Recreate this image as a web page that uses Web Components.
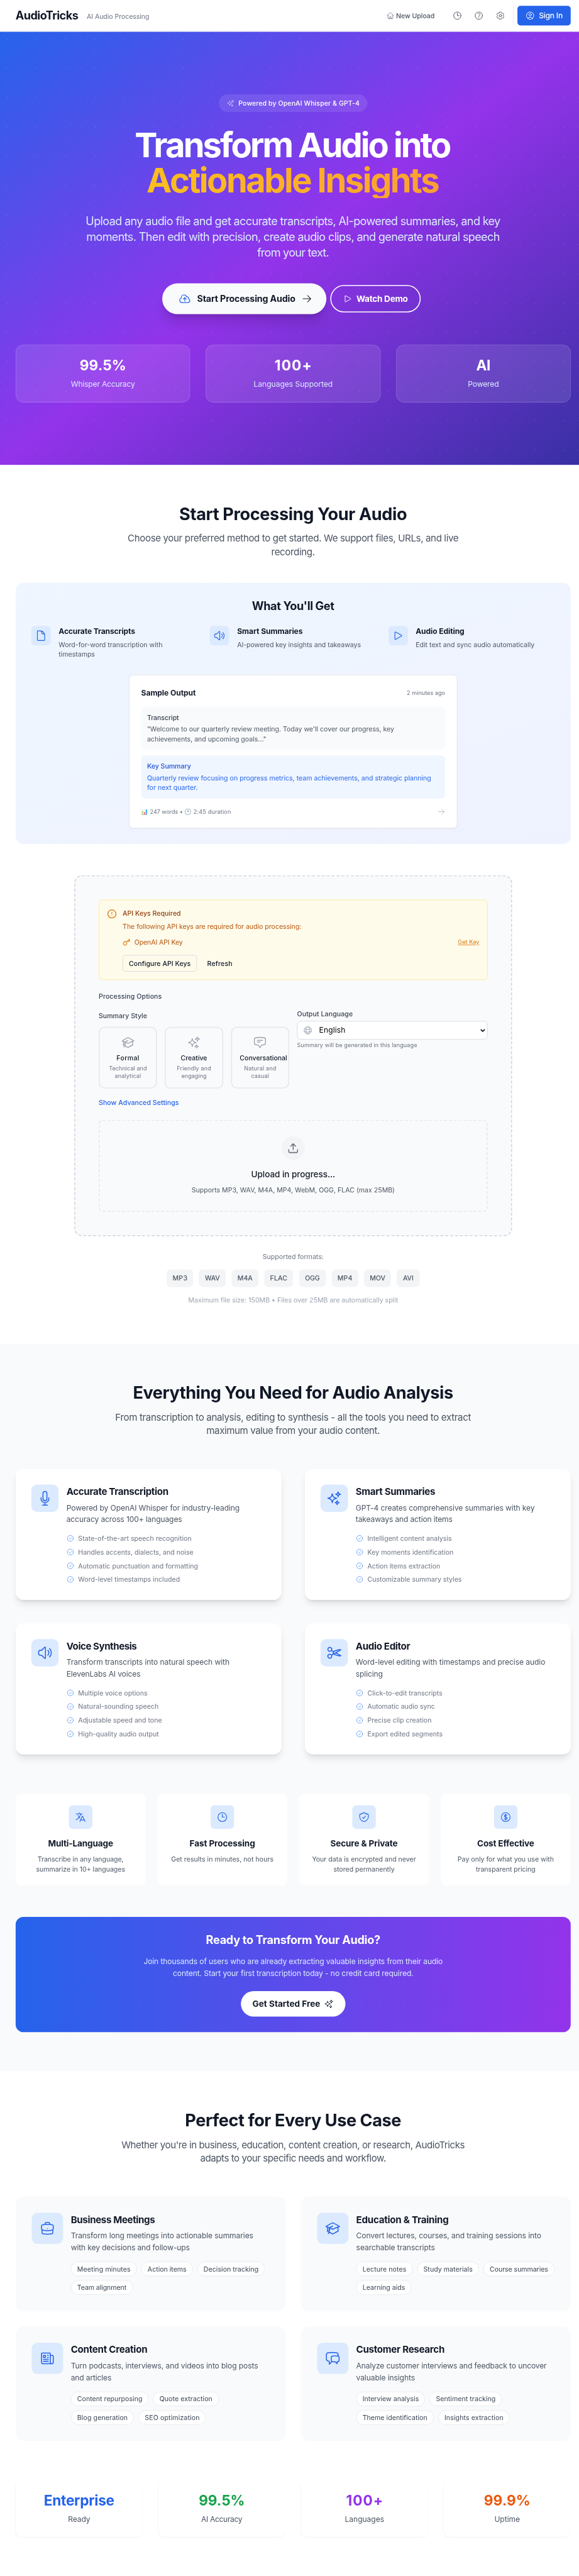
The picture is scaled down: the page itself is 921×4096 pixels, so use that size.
<!DOCTYPE html>
<html lang="en">
<head>
<meta charset="utf-8">
<title>AudioTricks</title>
<style>
html, body { margin: 0; height: 100%; overflow: hidden; background: #fff; }
body { font-family: Inter, "Liberation Sans", sans-serif; font-weight: 440; color: #111827; }
</style>
</head>
<body>
<audio-tricks-app></audio-tricks-app>
<script>
const ICONS = {
  home: 'm2.25 12 8.954-8.955c.44-.439 1.152-.439 1.591 0L21.75 12M4.5 9.75v10.125c0 .621.504 1.125 1.125 1.125H9.75v-4.875c0-.621.504-1.125 1.125-1.125h2.25c.621 0 1.125.504 1.125 1.125V21h4.125c.621 0 1.125-.504 1.125-1.125V9.75M8.25 21h8.25',
  clock: 'M12 6v6h4.5m4.5 0a9 9 0 1 1-18 0 9 9 0 0 1 18 0Z',
  question: 'M9.879 7.519c1.171-1.025 3.071-1.025 4.242 0 1.172 1.025 1.172 2.687 0 3.712-.203.179-.43.326-.67.442-.745.361-1.45.999-1.45 1.827v.75M21 12a9 9 0 1 1-18 0 9 9 0 0 1 18 0Zm-9 5.25h.008v.008H12v-.008Z',
  cog: 'M9.594 3.94c.09-.542.56-.94 1.11-.94h2.593c.55 0 1.02.398 1.11.94l.213 1.281c.063.374.313.686.645.87.074.04.147.083.22.127.325.196.72.257 1.075.124l1.217-.456a1.125 1.125 0 0 1 1.37.49l1.296 2.247a1.125 1.125 0 0 1-.26 1.431l-1.003.827c-.293.241-.438.613-.43.992a7.723 7.723 0 0 1 0 .255c-.008.378.137.75.43.991l1.004.827c.424.35.534.955.26 1.43l-1.298 2.247a1.125 1.125 0 0 1-1.369.491l-1.217-.456c-.355-.133-.75-.072-1.076.124a6.47 6.47 0 0 1-.22.128c-.331.183-.581.495-.644.869l-.213 1.281c-.09.543-.56.94-1.11.94h-2.594c-.55 0-1.019-.398-1.11-.94l-.213-1.281c-.062-.374-.312-.686-.644-.87a6.52 6.52 0 0 1-.22-.127c-.325-.196-.72-.257-1.076-.124l-1.217.456a1.125 1.125 0 0 1-1.369-.49l-1.297-2.247a1.125 1.125 0 0 1 .26-1.431l1.004-.827c.292-.24.437-.613.43-.991a6.932 6.932 0 0 1 0-.255c.007-.38-.138-.751-.43-.992l-1.004-.827a1.125 1.125 0 0 1-.26-1.43l1.297-2.247a1.125 1.125 0 0 1 1.37-.491l1.216.456c.356.133.751.072 1.076-.124.072-.044.146-.086.22-.128.332-.183.582-.495.644-.869l.214-1.28ZM15 12a3 3 0 1 1-6 0 3 3 0 0 1 6 0Z',
  user: 'M17.982 18.725A7.488 7.488 0 0 0 12 15.75a7.488 7.488 0 0 0-5.982 2.975m11.963 0a9 9 0 1 0-11.963 0m11.963 0A8.966 8.966 0 0 1 12 21a8.966 8.966 0 0 1-5.982-2.275M15 9.75a3 3 0 1 1-6 0 3 3 0 0 1 6 0Z',
  sparkles: 'M9.813 15.904 9 18.75l-.813-2.846a4.5 4.5 0 0 0-3.09-3.09L2.25 12l2.846-.813a4.5 4.5 0 0 0 3.09-3.09L9 5.25l.813 2.846a4.5 4.5 0 0 0 3.09 3.09L15.75 12l-2.846.813a4.5 4.5 0 0 0-3.09 3.09ZM18.259 8.715 18 9.75l-.259-1.035a3.375 3.375 0 0 0-2.455-2.456L14.25 6l1.036-.259a3.375 3.375 0 0 0 2.455-2.456L18 2.25l.259 1.035a3.375 3.375 0 0 0 2.456 2.456L21.75 6l-1.035.259a3.375 3.375 0 0 0-2.456 2.456ZM16.894 20.567 16.5 21.75l-.394-1.183a2.25 2.25 0 0 0-1.423-1.423L13.5 18.75l1.183-.394a2.25 2.25 0 0 0 1.423-1.423l.394-1.183.394 1.183a2.25 2.25 0 0 0 1.423 1.423l1.183.394-1.183.394a2.25 2.25 0 0 0-1.423 1.423Z',
  cloud: 'M12 16.5V9.75m0 0 3 3m-3-3-3 3M6.75 19.5a4.5 4.5 0 0 1-1.41-8.775 5.25 5.25 0 0 1 10.233-2.33 3 3 0 0 1 3.758 3.848A3.752 3.752 0 0 1 18 19.5H6.75Z',
  arrow: 'M13.5 4.5 21 12m0 0-7.5 7.5M21 12H3',
  play: 'M5.25 5.653c0-.856.917-1.398 1.667-.986l11.54 6.347a1.125 1.125 0 0 1 0 1.972l-11.54 6.347a1.125 1.125 0 0 1-1.667-.986V5.653Z',
  document: 'M19.5 14.25v-2.625a3.375 3.375 0 0 0-3.375-3.375h-1.5A1.125 1.125 0 0 1 13.5 7.125v-1.5a3.375 3.375 0 0 0-3.375-3.375H8.25m2.25 0H5.625c-.621 0-1.125.504-1.125 1.125v17.25c0 .621.504 1.125 1.125 1.125h12.75c.621 0 1.125-.504 1.125-1.125V11.25a9 9 0 0 0-9-9Z',
  speaker: 'M19.114 5.636a9 9 0 0 1 0 12.728M16.463 8.288a5.25 5.25 0 0 1 0 7.424M6.75 8.25l4.72-4.72a.75.75 0 0 1 1.28.53v15.88a.75.75 0 0 1-1.28.53l-4.72-4.72H4.51c-.88 0-1.704-.507-1.938-1.354A9.009 9.009 0 0 1 2.25 12c0-.83.112-1.633.322-2.396C2.806 8.756 3.63 8.25 4.51 8.25H6.75Z',
  alert: 'M22 12a10 10 0 1 1-20 0 10 10 0 0 1 20 0ZM12 8v4M12 16h.01',
  key: 'm21 2-2 2m-7.61 7.61a5.5 5.5 0 1 1-7.778 7.778 5.5 5.5 0 0 1 7.777-7.777zm0 0L15.5 7.5m0 0 3 3L22 7l-3-3m-3.5 3.5L19 4',
  upload: 'M21 15v4a2 2 0 0 1-2 2H5a2 2 0 0 1-2-2v-4M17 8l-5-5-5 5M12 3v12',
  academic: 'M4.26 10.147a60.438 60.438 0 0 0-.491 6.347A48.62 48.62 0 0 1 12 20.904a48.62 48.62 0 0 1 8.232-4.41 60.46 60.46 0 0 0-.491-6.347m-15.482 0a50.636 50.636 0 0 0-2.658-.813A59.906 59.906 0 0 1 12 3.493a59.903 59.903 0 0 1 10.399 5.84c-.896.248-1.783.52-2.658.814m-15.482 0A50.717 50.717 0 0 1 12 13.489a50.702 50.702 0 0 1 7.74-3.342M6.75 15a.75.75 0 1 0 0-1.5.75.75 0 0 0 0 1.5Zm0 0v-3.675A55.378 55.378 0 0 1 12 8.443m-7.007 11.55A5.981 5.981 0 0 0 6.75 15.75v-1.5',
  bubble: 'M7.5 8.25h9m-9 3H12m-9.75 1.51c0 1.6 1.123 2.994 2.707 3.227 1.129.166 2.27.293 3.423.379.35.026.67.21.865.501L12 21l2.755-4.133a1.14 1.14 0 0 1 .865-.501 48.172 48.172 0 0 0 3.423-.379c1.584-.233 2.707-1.626 2.707-3.228V6.741c0-1.602-1.123-2.995-2.707-3.228A48.394 48.394 0 0 0 12 3c-2.392 0-4.744.175-7.043.513C3.373 3.746 2.25 5.14 2.25 6.741v6.018Z',
  globe: 'M12 21a9.004 9.004 0 0 0 8.716-6.747M12 21a9.004 9.004 0 0 1-8.716-6.747M12 21c2.485 0 4.5-4.03 4.5-9S14.485 3 12 3m0 18c-2.485 0-4.5-4.03-4.5-9S9.515 3 12 3m0 0a8.997 8.997 0 0 1 7.843 4.582M12 3a8.997 8.997 0 0 0-7.843 4.582m15.686 0A11.953 11.953 0 0 1 12 10.5c-2.998 0-5.74-1.1-7.843-2.918m15.686 0A8.959 8.959 0 0 1 21 12c0 .778-.099 1.533-.284 2.253m0 0A17.919 17.919 0 0 1 12 16.5c-3.162 0-6.133-.815-8.716-2.247m0 0A9.015 9.015 0 0 1 3 12c0-1.605.42-3.113 1.157-4.418',
  mic: 'M12 18.75a6 6 0 0 0 6-6v-1.5m-6 7.5a6 6 0 0 1-6-6v-1.5m6 7.5v3.75m-3.75 0h7.5M12 15.75a3 3 0 0 1-3-3V4.5a3 3 0 1 1 6 0v8.25a3 3 0 0 1-3 3Z',
  scissors: 'm7.848 8.25 1.536.887M7.848 8.25a3 3 0 1 1-5.196-3 3 3 0 0 1 5.196 3Zm1.536.887a2.165 2.165 0 0 1 1.083 1.839c.005.351.054.695.14 1.024M9.384 9.137l2.077 1.199M7.848 15.75l1.536-.887m-1.536.887a3 3 0 1 1-5.196 3 3 3 0 0 1 5.196-3Zm1.536-.887a2.165 2.165 0 0 0 1.083-1.838c.005-.352.054-.695.14-1.025m-1.223 2.863 2.077-1.199m0-3.328a4.323 4.323 0 0 1 2.068-1.379l5.325-1.628a4.5 4.5 0 0 1 2.48-.044l.803.215-7.794 4.5m-2.882-1.664A4.33 4.33 0 0 0 10.607 12m3.736 0 7.794 4.5-.802.215a4.5 4.5 0 0 1-2.48-.043l-5.326-1.629a4.324 4.324 0 0 1-2.068-1.379M14.343 12l-2.882 1.664',
  check: 'M9 12.75 11.25 15 15 9.75M21 12a9 9 0 1 1-18 0 9 9 0 0 1 18 0Z',
  language: 'm10.5 21 5.25-11.25L21 21m-9-3h7.5M3 5.621a48.474 48.474 0 0 1 6-.371m0 0c1.12 0 2.233.038 3.334.114M9 5.25V3m3.334 2.364C11.176 10.658 7.69 15.08 3 17.502m9.334-12.138c.896.061 1.785.147 2.666.257m-4.589 8.495a18.023 18.023 0 0 1-3.827-5.802',
  shield: 'M9 12.75 11.25 15 15 9.75m-3-7.036A11.959 11.959 0 0 1 3.598 6 11.99 11.99 0 0 0 3 9.749c0 5.592 3.824 10.29 9 11.623 5.176-1.332 9-6.03 9-11.622 0-1.31-.21-2.571-.598-3.751h-.152c-3.196 0-6.1-1.248-8.25-3.285Z',
  dollar: 'M12 6v12m-3-2.818.879.659c1.171.879 3.07.879 4.242 0 1.172-.879 1.172-2.303 0-3.182C13.536 12.219 12.768 12 12 12c-.725 0-1.45-.22-2.003-.659-1.106-.879-1.106-2.303 0-3.182s2.9-.879 4.006 0l.415.33M21 12a9 9 0 1 1-18 0 9 9 0 0 1 18 0Z',
  briefcase: 'M20.25 14.15v4.25c0 1.094-.787 2.036-1.872 2.18-2.087.277-4.216.42-6.378.42s-4.291-.143-6.378-.42c-1.085-.144-1.872-1.086-1.872-2.18v-4.25m16.5 0a2.18 2.18 0 0 0 .75-1.661V8.706c0-1.081-.768-2.015-1.837-2.175a48.114 48.114 0 0 0-3.413-.387m4.5 8.006c-.194.165-.42.295-.673.38A23.978 23.978 0 0 1 12 15.75c-2.648 0-5.195-.429-7.577-1.22a2.016 2.016 0 0 1-.673-.38m0 0A2.18 2.18 0 0 1 3 12.489V8.706c0-1.081.768-2.015 1.837-2.175a48.111 48.111 0 0 1 3.413-.387m7.5 0V5.25A2.25 2.25 0 0 0 13.5 3h-3a2.25 2.25 0 0 0-2.25 2.25v.894m7.5 0a48.667 48.667 0 0 0-7.5 0M12 12.75h.008v.008H12v-.008Z',
  newspaper: 'M12 7.5h1.5m-1.5 3h1.5m-7.5 3h7.5m-7.5 3h7.5m3-9h3.375c.621 0 1.125.504 1.125 1.125V18a2.25 2.25 0 0 1-2.25 2.25M16.5 7.5V18a2.25 2.25 0 0 0 2.25 2.25M16.5 7.5V4.875c0-.621-.504-1.125-1.125-1.125H4.125C3.504 3.75 3 4.254 3 4.875V18a2.25 2.25 0 0 0 2.25 2.25h13.5M6 7.5h3v3H6v-3Z',
  chats: 'M20.25 8.511c.884.284 1.5 1.128 1.5 2.097v4.286c0 1.136-.847 2.1-1.98 2.193-.34.027-.68.052-1.02.072v3.091l-3-3c-1.354 0-2.694-.055-4.02-.163a2.115 2.115 0 0 1-.825-.242m9.345-8.334a2.126 2.126 0 0 0-.476-.095 48.64 48.64 0 0 0-8.048 0c-1.131.094-1.976 1.057-1.976 2.192v4.286c0 .837.46 1.58 1.155 1.951m9.345-8.334V6.637c0-1.621-1.152-3.026-2.76-3.235A48.455 48.455 0 0 0 11.25 3c-2.115 0-4.198.137-6.24.402-1.608.209-2.76 1.614-2.76 3.235v6.226c0 1.621 1.152 3.026 2.76 3.235.577.075 1.157.14 1.74.194V21l4.155-4.155'
};

/* Shared type scale and text alignment helpers, included in every shadow root. */
const BASE = `
*, *::before, *::after { box-sizing: border-box; }
:host { display: block; box-sizing: border-box; }
h1, h2, h3, h4, h5, p { margin: 0; padding: 0; }
.t12 { font-size: 11.64px; line-height: 16px; }
.t14 { font-size: 13.58px; line-height: 20px; }
.t16 { font-size: 15.52px; line-height: 24px; }
.t18 { font-size: 17.46px; line-height: 28px; }
.t20 { font-size: 19.4px; line-height: 28px; }
.t24 { font-size: 23.28px; line-height: 32px; }
.t30 { font-size: 29.1px; line-height: 36px; }
.t36 { font-size: 34.92px; line-height: 40px; }
.m { font-weight: 540; } .s { font-weight: 650; } .b { font-weight: 735; }
.lines { display: flex; flex-direction: column; align-items: flex-start; }
.mid { align-items: center; text-align: center; }
.row { display: flex; align-items: center; }
.c5 { color: #6b7280; } .c6 { color: #4b5563; } .c7 { color: #374151; } .c9 { color: #111827; }
`;
const esc = s => s.replace(/&/g, '&amp;');
const T = (text, w) => `<fit-text w="${w}">${esc(text)}</fit-text>`;
const L = (...pairs) => pairs.map(([t, w]) => T(t, w)).join('');
const define = (tag, css, html) => customElements.define(tag, class extends HTMLElement {
  connectedCallback() {
    if (this.shadowRoot) return;
    const root = this.attachShadow({ mode: 'open' });
    root.innerHTML = `<style>${BASE}${css}</style>${typeof html === 'function' ? html(this) : html}`;
  }
});

/* One line of text tracked to a target optical width. */
const ruler = document.createElement('canvas').getContext('2d');
customElements.define('fit-text', class extends HTMLElement {
  connectedCallback() {
    if (this.shadowRoot) return;
    this.attachShadow({ mode: 'open' }).innerHTML = '<style>:host{display:inline-block;white-space:nowrap}</style><slot></slot>';
    const text = this.textContent, w = parseFloat(this.getAttribute('w')), cs = getComputedStyle(this);
    if (!w || text.length < 2) return;
    ruler.font = `${cs.fontWeight} ${cs.fontSize} Inter`;
    const m = ruler.measureText(text);
    const gap = (w - (m.actualBoundingBoxLeft + m.actualBoundingBoxRight)) / (text.length - 1);
    this.style.letterSpacing = gap.toFixed(4) + 'px';
    this.style.marginRight = (-gap).toFixed(4) + 'px';
  }
});

customElements.define('ui-icon', class extends HTMLElement {
  connectedCallback() {
    if (this.shadowRoot) return;
    const s = this.getAttribute('size') || 24;
    this.attachShadow({ mode: 'open' }).innerHTML = `<style>:host{display:block;flex:none;width:${s}px;height:${s}px}svg{display:block}</style>
    <svg width="${s}" height="${s}" viewBox="0 0 24 24" fill="none" stroke="currentColor" stroke-width="${this.getAttribute('stroke') || 1.5}" stroke-linecap="round" stroke-linejoin="round"><path d="${ICONS[this.getAttribute('name')]}"/></svg>`;
  }
});

define('icon-tile', `
:host { display: flex; flex: none; align-items: center; justify-content: center; background: #dbeafe; color: #2563eb; width: var(--tile); height: var(--tile); border-radius: var(--r, 8px); }
`, el => `<ui-icon name="${el.getAttribute('name')}" size="${el.getAttribute('size')}"></ui-icon>`);

define('top-nav', `
:host { display: flex; align-items: center; height: 65px; padding: 0 32px; background: #fff; border-bottom: 1px solid #e5e7eb; }
.tag { margin-left: 17px; margin-top: 1px; }
.right { margin-left: auto; display: flex; align-items: center; color: #4b5563; }
.up { gap: 4px; margin-right: 28.5px; }
.up ui-icon { opacity: .85; }
.btn { width: 36px; height: 36px; margin-right: 8px; display: flex; align-items: center; justify-content: center; }
.rule { width: 1px; height: 40px; background: #e5e7eb; margin-right: 8px; }
.sign { gap: 8px; width: 109px; height: 40px; padding: 0 16px; border-radius: 6px; background: #2563eb; color: #fff; }
`, `
<h1 class="t24 b">${T('AudioTricks', 128.5)}</h1>
<span class="tag t14 c5">${T('AI Audio Processing', 127.7)}</span>
<div class="right">
  <div class="up row t14 m"><ui-icon name="home" size="16"></ui-icon>${T('New Upload', 77.5)}</div>
  <div class="btn"><ui-icon name="clock" size="20"></ui-icon></div>
  <div class="btn"><ui-icon name="question" size="20"></ui-icon></div>
  <div class="btn"><ui-icon name="cog" size="20"></ui-icon></div>
  <div class="rule"></div>
  <div class="sign row t16 m"><ui-icon name="user" size="20"></ui-icon>${T('Sign In', 48.4)}</div>
</div>`);

define('glass-stat', `
:host { display: flex; flex-direction: column; align-items: center; gap: 8px; padding: 24px; border: 1px solid rgba(255,255,255,.2); border-radius: 16px; background: rgba(255,255,255,.1); color: #fff; }
.l { color: #dbeafe; }
`, el => `<div class="t30 b">${T(el.getAttribute('value'), el.getAttribute('vw'))}</div><div class="t16 l">${T(el.getAttribute('label'), el.getAttribute('lw'))}</div>`);

define('hero-banner', `
:host { height: 886px; padding: 128px 32px 0; color: #fff; display: flex; flex-direction: column; align-items: center;
  background:
    radial-gradient(circle at 15px 15px, rgba(255,255,255,.09) 1px, transparent 1.6px) 0 0/60px 60px,
    radial-gradient(circle at 45px 15px, rgba(255,255,255,.06) 1px, transparent 1.6px) 0 0/60px 60px,
    radial-gradient(circle at 15px 45px, rgba(255,255,255,.06) 1px, transparent 1.6px) 0 0/60px 60px,
    linear-gradient(to bottom right, #2563eb, #9333ea, #3730a3); }
.badge { height: 36px; padding: 0 16px; gap: 8px; border-radius: 18px; background: rgba(255,255,255,.1); }
.badge ui-icon { color: rgba(255,255,255,.65); }
h1 { font-size: 69.84px; line-height: 72px; font-weight: 720; margin-top: 32px; align-self: stretch; text-align: center; }
h1 span { display: block; height: 72px; }
.gold { color: transparent; background: linear-gradient(to right, #facc15, #fb923c); -webkit-background-clip: text; background-clip: text; }
.lead { margin-top: 32px; color: #dbeafe; font-size: 23.28px; line-height: 32px; }
.actions { margin-top: 48px; gap: 16px; height: 60px; }
.primary { width: 320px; height: 60px; padding: 0 28px 0 32px; gap: 12px; border-radius: 30px; background: #f9fafb; color: #111827; transform: scale(1.05); box-shadow: 0 20px 25px -5px rgba(0,0,0,.14), 0 8px 10px -6px rgba(0,0,0,.14); }
.primary ui-icon:first-child { color: #2563eb; }
.primary ui-icon:last-child { margin-left: auto; }
.demo { width: 185px; height: 56px; padding: 0 24px; gap: 8px; border-radius: 28px; border: 2px solid #fff; }
.stats { align-self: stretch; margin-top: 64px; display: grid; grid-template-columns: repeat(3, 1fr); gap: 32px; }
`, `
<div class="badge row t14 m"><ui-icon name="sparkles" size="16"></ui-icon>${T('Powered by OpenAI Whisper & GPT-4', 247)}</div>
<h1><span>${T('Transform Audio into', 644.6)}</span><span class="gold">${T('Actionable Insights', 597)}</span></h1>
<p class="lead lines mid">${L(['Upload any audio file and get accurate transcripts, AI-powered summaries, and key', 847], ['moments. Then edit with precision, create audio clips, and generate natural speech', 844], ['from your text.', 146])}</p>
<div class="actions row">
  <div class="primary row t18 s"><ui-icon name="cloud" size="24"></ui-icon>${T('Start Processing Audio', 191)}<ui-icon name="arrow" size="20"></ui-icon></div>
  <div class="demo row t18 s"><ui-icon name="play" size="20"></ui-icon>${T('Watch Demo', 104.7)}</div>
</div>
<div class="stats">
  <glass-stat value="99.5%" vw="91.4" label="Whisper Accuracy" lw="131.5"></glass-stat>
  <glass-stat value="100+" vw="73.3" label="Languages Supported" lw="160"></glass-stat>
  <glass-stat value="AI" vw="28" label="Powered" lw="62"></glass-stat>
</div>`);

define('section-head', `
:host { display: flex; flex-direction: column; align-items: center; gap: 16px; }
`, `<h2 class="t36 b c9"><slot name="title"></slot></h2><p class="t20 c6 lines mid"><slot></slot></p>`);

define('gain-item', `
:host { display: flex; gap: 16px; }
p { margin-top: 4px; }
`, el => `<icon-tile name="${el.getAttribute('icon')}" size="24" style="--tile:40px"></icon-tile><div><h4 class="t16 s c9"><slot name="title"></slot></h4><p class="t14 c6 lines"><slot></slot></p></div>`);

define('sample-output', `
:host { width: 672px; height: 314px; padding: 24px; border: 1px solid #e5e7eb; border-radius: 8px; background: #fff; box-shadow: 0 1px 2px rgba(0,0,0,.05); }
.head, .foot { display: flex; justify-content: space-between; align-items: center; }
.head { height: 24px; margin-bottom: 16px; }
.box { height: 88px; padding: 12px; border-radius: 8px; background: #f9fafb; margin-bottom: 12px; }
.box p { margin-top: 4px; }
.blue { background: #eff6ff; color: #2563eb; margin-bottom: 16px; }
.blue h5 { color: #1d4ed8; }
.foot { height: 20px; padding-top: 2px; }
.meta { gap: 4px; }
.e { width: 14px; font-size: 12px; font-family: "Noto Color Emoji", sans-serif; white-space: nowrap; }
.foot > ui-icon { color: #9ca3af; }
`, `
<div class="head"><span class="t16 s c9">${T('Sample Output', 112)}</span><span class="t12 c5">${T('2 minutes ago', 78.6)}</span></div>
<div class="box"><h5 class="t14 m c7">${T('Transcript', 65.7)}</h5><p class="t14 c6 lines">${L(['"Welcome to our quarterly review meeting. Today we\'ll cover our progress, key', 505], ['achievements, and upcoming goals..."', 242.6])}</p></div>
<div class="box blue"><h5 class="t14 m">${T('Key Summary', 89)}</h5><p class="t14 lines">${L(['Quarterly review focusing on progress metrics, team achievements, and strategic planning', 581], ['for next quarter.', 102.8])}</p></div>
<div class="foot t12 c5"><div class="meta row"><span class="e">📊</span>${T('247 words •', 66.5)}<span class="e">🕐</span>${T('2:45 duration', 75.6)}</div><ui-icon name="arrow" size="16" stroke="1.3"></ui-icon></div>`);

define('gains-panel', `
:host { margin: 0 32px; padding: 32px; height: 534px; border-radius: 16px; background: linear-gradient(to bottom right, #eff6ff, #eef2ff); display: flex; flex-direction: column; align-items: center; }
.grid { align-self: stretch; display: grid; grid-template-columns: repeat(3, 1fr); gap: 24px; margin: 24px 0 32px; }
`, `
<h3 class="t24 b c9">${T("What You'll Get", 169)}</h3>
<div class="grid">
  <gain-item icon="document"><fit-text slot="title" w="157">Accurate Transcripts</fit-text>${L(['Word-for-word transcription with', 211.6], ['timestamps', 74])}</gain-item>
  <gain-item icon="speaker"><fit-text slot="title" w="134.5">Smart Summaries</fit-text>${T('AI-powered key insights and takeaways', 253)}</gain-item>
  <gain-item icon="play"><fit-text slot="title" w="99">Audio Editing</fit-text>${T('Edit text and sync audio automatically', 242.6)}</gain-item>
</div>
<sample-output></sample-output>`);

define('key-notice', `
:host { display: flex; gap: 12px; height: 164px; padding: 16px; border: 1px solid #fde68a; border-radius: 8px; background: #fffbeb; color: #b45309; }
:host > ui-icon, .alert { color: #d97706; margin-top: 2px; }
.body { flex: 1; }
.h { color: #92400e; height: 20px; margin-bottom: 8px; }
.d { height: 20px; margin-bottom: 12px; }
.k { display: flex; align-items: center; justify-content: space-between; height: 20px; margin-bottom: 16px; }
.k .row { gap: 8px; } .k ui-icon, .link { color: #d97706; }
.link fit-text { text-decoration: underline; }
.btns { gap: 8px; color: #111827; }
.o, .g { height: 34px; display: flex; align-items: center; justify-content: center; }
.o { width: 152px; border: 1px solid #d1d5db; border-radius: 6px; }
.g { padding: 0 13px; }
`, `
<ui-icon class="alert" name="alert" size="20" stroke="2"></ui-icon>
<div class="body t14">
  <div class="h m">${T('API Keys Required', 118.7)}</div>
  <div class="d">${T('The following API keys are required for audio processing:', 365)}</div>
  <div class="k"><div class="row"><ui-icon name="key" size="16" stroke="2"></ui-icon>${T('OpenAI API Key', 99.5)}</div><span class="link t12">${T('Get Key', 44.4)}</span></div>
  <div class="btns row m"><div class="o">${T('Configure API Keys', 126)}</div><div class="g">${T('Refresh', 50.4)}</div></div>
</div>`);

define('style-option', `
:host { display: flex; flex-direction: column; align-items: center; height: 126px; min-width: 0; padding: 16px; border: 2px solid #e5e7eb; border-radius: 12px; }
ui-icon { color: #9ca3af; margin-bottom: 8px; }
.w { align-self: stretch; min-width: 0; text-align: center; height: 20px; }
p { margin-top: 4px; }
`, el => `<ui-icon name="${el.getAttribute('icon')}" size="28"></ui-icon><div class="w t14 m c9"><slot name="title"></slot></div><p class="t12 c5 lines mid" style="line-height:15px"><slot></slot></p>`);

define('upload-panel', `
:host { width: 896px; height: 738px; margin: 64px auto 0; padding: 48px; border: 2px dashed #d1d5db; border-radius: 16px; background: #f9fafb; }
.po { margin: 24px 0 16px; height: 20px; }
.cols { display: grid; grid-template-columns: 1fr 1fr; gap: 16px; height: 162px; }
.ss { height: 20px; margin: 3px 0 13px; }
.opts { display: grid; grid-template-columns: repeat(3, minmax(0, 1fr)); gap: 16px; }
.ol { height: 20px; margin-bottom: 4px; }
.select { height: 38px; padding: 0 4px 0 12px; border: 1px solid #d1d5db; border-radius: 8px; background: #fff; color: #000; gap: 13px; margin-bottom: 4px; }
.select ui-icon { color: #9ca3af; margin-left: -1px; }
.select svg { margin-left: auto; }
.adv { color: #2563eb; height: 20px; margin: 19px 0 25px; }
.drop { height: 188px; border: 2px dashed #e5e7eb; border-radius: 8px; padding-top: 32px; display: flex; flex-direction: column; align-items: center; }
.disc { width: 48px; height: 48px; border-radius: 50%; background: #f3f4f6; color: #6b7280; display: flex; align-items: center; justify-content: center; margin-bottom: 16px; }
.sup { margin-top: 8px; }
`, `
<key-notice></key-notice>
<div class="po t14 m c7">${T('Processing Options', 127.7)}</div>
<div class="cols">
  <div>
    <div class="ss t14 m c7">${T('Summary Style', 99)}</div>
    <div class="opts">
      <style-option icon="academic"><fit-text slot="title" w="45">Formal</fit-text>${L(['Technical and', 77.3], ['analytical', 52.8])}</style-option>
      <style-option icon="sparkles"><fit-text slot="title" w="54">Creative</fit-text>${L(['Friendly and', 69], ['engaging', 51.6])}</style-option>
      <style-option icon="bubble"><fit-text slot="title" w="96.5">Conversational</fit-text>${L(['Natural and', 64.7], ['casual', 36])}</style-option>
    </div>
  </div>
  <div>
    <div class="ol t14 m c7">${T('Output Language', 114)}</div>
    <div class="select row t16"><ui-icon name="globe" size="20"></ui-icon>${T('English', 51.6)}<svg width="10" height="7" viewBox="0 0 10 7" fill="none" stroke="#000" stroke-width="2"><path d="M1 1.2 5 5.2 9 1.2"/></svg></div>
    <div class="t12 c5">${T('Summary will be generated in this language', 245.8)}</div>
  </div>
</div>
<div class="adv t14 m">${T('Show Advanced Settings', 163.7)}</div>
<div class="drop">
  <div class="disc"><ui-icon name="upload" size="24" stroke="2"></ui-icon></div>
  <div class="t18 m c9">${T('Upload in progress...', 169.7)}</div>
  <div class="sup t14 c6">${T('Supports MP3, WAV, M4A, MP4, WebM, OGG, FLAC (max 25MB)', 415)}</div>
</div>`);

define('format-list', `
:host { display: flex; flex-direction: column; align-items: center; gap: 16px; margin-top: 32px; }
.chips { display: flex; gap: 12px; }
.chips span { height: 36px; border-radius: 8px; background: #f3f4f6; padding: 8px 0; text-align: center; }
.max { color: #9ca3af; }
`, `
<div class="t14 c5">${T('Supported formats:', 124)}</div>
<div class="chips t14 m c6">${[['MP3', 28.8, 54], ['WAV', 30.6, 54.8], ['M4A', 30, 54.8], ['FLAC', 34.2, 58.8], ['OGG', 30, 55.2], ['MP4', 29.4, 54], ['MOV', 31.2, 55.6], ['AVI', 21, 46.2]].map(([t, w, b]) => `<span style="width:${b}px">${T(t, w)}</span>`).join('')}</div>
<div class="t14 max">${T('Maximum file size: 150MB • Files over 25MB are automatically split', 429)}</div>`);

define('start-section', `
:host { height: 1797px; padding-top: 80px; background: #fff; }
section-head { height: 161px; }
`, `
<section-head><fit-text slot="title" w="465">Start Processing Your Audio</fit-text>${L(['Choose your preferred method to get started. We support files, URLs, and live', 676], ['recording.', 87.7])}</section-head>
<gains-panel></gains-panel>
<upload-panel></upload-panel>
<format-list></format-list>`);

define('feature-card', `
:host { display: flex; gap: 16px; height: 268px; padding: 32px; border-radius: 16px; background: #fff; box-shadow: 0 10px 15px -3px rgba(0,0,0,.1), 0 4px 6px -4px rgba(0,0,0,.1); }
p { margin: 8px 0 16px; height: 48px; }
.list { display: flex; flex-direction: column; gap: 8px; }
`, `<slot name="icon"></slot><div><h3 class="t20 s c9"><slot name="title"></slot></h3><p class="t16 c6 lines"><slot></slot></p><div class="list"><slot name="item"></slot></div></div>`);

define('check-item', `
:host { display: flex; align-items: center; gap: 8px; height: 20px; }
ui-icon { color: #3b82f6; }
`, el => `<ui-icon name="check" size="16" stroke="1.3"></ui-icon><span class="t14 c5">${T(el.getAttribute('text'), el.getAttribute('w'))}</span>`);

define('mini-card', `
:host { display: flex; flex-direction: column; align-items: center; height: 188px; padding: 24px; border-radius: 12px; background: #fff; }
h4 { margin: 16px 0 8px; }
p { margin: 0 -12px; }
`, el => `<icon-tile name="${el.getAttribute('icon')}" size="24" style="--tile:48px"></icon-tile><h4 class="t18 s c9"><slot name="title"></slot></h4><p class="t14 c6 lines mid"><slot></slot></p>`);

define('cta-banner', `
:host { height: 236px; padding: 32px; border-radius: 16px; background: linear-gradient(to right, #2563eb, #9333ea); color: #fff; display: flex; flex-direction: column; align-items: center; }
p { margin: 16px 0 24px; color: #dbeafe; }
.btn { height: 52px; padding: 0 24px; gap: 8px; border-radius: 26px; background: #fff; color: #111827; }
`, `
<h3 class="t24 b">${T('Ready to Transform Your Audio?', 355)}</h3>
<p class="t16 lines mid">${L(['Join thousands of users who are already extracting valuable insights from their audio', 612], ['content. Start your first transcription today - no credit card required.', 492])}</p>
<div class="btn row t18 s">${T('Get Started Free', 138.3)}<ui-icon name="sparkles" size="20"></ui-icon></div>`);

const FEATURES = [
  ['mic', ['Accurate Transcription', 207.8], [['Powered by OpenAI Whisper for industry-leading', 353], ['accuracy across 100+ languages', 236.5]], [['State-of-the-art speech recognition', 231], ['Handles accents, dialects, and noise', 235], ['Automatic punctuation and formatting', 245], ['Word-level timestamps included', 207.8]]],
  ['sparkles', ['Smart Summaries', 163], [['GPT-4 creates comprehensive summaries with key', 366.5], ['takeaways and action items', 198]], [['Intelligent content analysis', 171.5], ['Key moments identification', 174], ['Action items extraction', 148], ['Customizable summary styles', 192.7]]],
  ['speaker', ['Voice Synthesis', 144.3], [['Transform transcripts into natural speech with', 332.5], ['ElevenLabs AI voices', 150.4]], [['Multiple voice options', 140.6], ['Natural-sounding speech', 162.5], ['Adjustable speed and tone', 171.5], ['High-quality audio output', 164.7]]],
  ['scissors', ['Audio Editor', 111.8], [['Word-level editing with timestamps and precise audio', 387.7], ['splicing', 55]], [['Click-to-edit transcripts', 153.4], ['Automatic audio sync', 138.3], ['Precise clip creation', 129.2], ['Export edited segments', 152.7]]]
];
const MINIS = [
  ['language', ['Multi-Language', 132], [['Transcribe in any language,', 175], ['summarize in 10+ languages', 182]]],
  ['clock', ['Fast Processing', 132], [['Get results in minutes, not hours', 209.3]]],
  ['shield', ['Secure & Private', 137.5], [['Your data is encrypted and never', 212.4], ['stored permanently', 125.4]]],
  ['dollar', ['Cost Effective', 116.4], [['Pay only for what you use with', 195], ['transparent pricing', 121.7]]]
];
define('features-section', `
:host { height: 1488px; padding: 80px 32px; background: #f9fafb; }
.cards { display: grid; grid-template-columns: 1fr 1fr; gap: 48px; margin: 64px 0 80px; }
.minis { display: grid; grid-template-columns: repeat(4, 1fr); gap: 24px; margin-bottom: 64px; }
`, `
<section-head><fit-text slot="title" w="653">Everything You Need for Audio Analysis</fit-text>${L(['From transcription to analysis, editing to synthesis - all the tools you need to extract', 727], ['maximum value from your audio content.', 353.7])}</section-head>
<div class="cards">${FEATURES.map(([i, t, d, items]) => `<feature-card><icon-tile slot="icon" name="${i}" size="32" style="--tile:56px;--r:12px"></icon-tile><fit-text slot="title" w="${t[1]}">${t[0]}</fit-text>${L(...d)}${items.map(([x, w]) => `<check-item slot="item" text="${x}" w="${w}"></check-item>`).join('')}</feature-card>`).join('')}</div>
<div class="minis">${MINIS.map(([i, t, d]) => `<mini-card icon="${i}"><fit-text slot="title" w="${t[1]}">${esc(t[0])}</fit-text>${L(...d)}</mini-card>`).join('')}</div>
<cta-banner></cta-banner>`);

define('use-card', `
:host { display: flex; gap: 16px; height: 234px; padding: 33px; border-radius: 16px; background: #f9fafb; }
.body { flex: 1; min-width: 0; }
p { margin: 8px 0 16px; height: 48px; }
.tags { display: flex; flex-wrap: wrap; gap: 8px 9px; margin-right: -10px; }
`, `<slot name="icon"></slot><div class="body"><h3 class="t20 s c9"><slot name="title"></slot></h3><p class="t16 c6 lines"><slot></slot></p><div class="tags"><slot name="tag"></slot></div></div>`);

define('tag-pill', `
:host { display: block; height: 30px; padding: 4px 12px; border: 1px solid #e5e7eb; border-radius: 15px; background: #fff; }
span { display: block; }
`, el => `<span class="t14 c7">${T(el.getAttribute('text'), el.getAttribute('w'))}</span>`);

define('metric-card', `
:host { display: flex; flex-direction: column; align-items: center; gap: 8px; height: 116px; padding: 24px; border-radius: 12px; background: #fff; box-shadow: 0 1px 2px rgba(0,0,0,.04); }
`, el => `<div class="t30 b" style="color:${el.getAttribute('color')}">${T(el.getAttribute('value'), el.getAttribute('vw'))}</div><div class="t16 c6">${T(el.getAttribute('label'), el.getAttribute('lw'))}</div>`);

const CASES = [
  ['briefcase', ['Business Meetings', 171.5], [['Transform long meetings into actionable summaries', 373.3], ['with key decisions and follow-ups', 243.3]], [['Meeting minutes', 108], ['Action items', 79.3], ['Decision tracking', 111], ['Team alignment', 101.3]]],
  ['academic', ['Education & Training', 188], [['Convert lectures, courses, and training sessions into', 378.6], ['searchable transcripts', 161]], [['Lecture notes', 88.4], ['Study materials', 100.5], ['Course summaries', 119.4], ['Learning aids', 86]]],
  ['newspaper', ['Content Creation', 155.7], [['Turn podcasts, interviews, and videos into blog posts', 383], ['and articles', 83]], [['Content repurposing', 133], ['Quote extraction', 107.3], ['Blog generation', 101.3], ['SEO optimization', 111]]],
  ['chats', ['Customer Research', 180], [['Analyze customer interviews and feedback to uncover', 390], ['valuable insights', 120]], [['Interview analysis', 114], ['Sentiment tracking', 121.7], ['Theme identification', 131.5], ['Insights extraction', 118.6]]]
];
define('cases-section', `
:host { padding: 80px 32px; background: #fff; }
.cards { display: grid; grid-template-columns: 1fr 1fr; gap: 32px; margin: 64px 0 80px; }
.metrics { display: grid; grid-template-columns: repeat(4, 1fr); gap: 32px; }
`, `
<section-head><fit-text slot="title" w="439.8">Perfect for Every Use Case</fit-text>${L(["Whether you're in business, education, content creation, or research, AudioTricks", 702.8], ['adapts to your specific needs and workflow.', 380])}</section-head>
<div class="cards">${CASES.map(([i, t, d, tags]) => `<use-card><icon-tile slot="icon" name="${i}" size="32" style="--tile:64px;--r:12px"></icon-tile><fit-text slot="title" w="${t[1]}">${esc(t[0])}</fit-text>${L(...d)}${tags.map(([x, w]) => `<tag-pill slot="tag" text="${x}" w="${w}"></tag-pill>`).join('')}</use-card>`).join('')}</div>
<div class="metrics">
  <metric-card value="Enterprise" vw="143" label="Ready" lw="44.6" color="#2563eb"></metric-card>
  <metric-card value="99.5%" vw="90.7" label="AI Accuracy" lw="84.6" color="#16a34a"></metric-card>
  <metric-card value="100+" vw="72.5" label="Languages" lw="79.3" color="#9333ea"></metric-card>
  <metric-card value="99.9%" vw="91.4" label="Uptime" lw="51.4" color="#ea580c"></metric-card>
</div>`);

/* The layout is drawn on a 1200px canvas and scaled down as one piece; the host clips it to the window. */
define('audio-tricks-app', `
:host { width: 100%; height: 100vh; overflow: hidden; }
.clip { width: 1185px; height: 5268px; overflow: hidden; transform: scale(.77722, .77752); transform-origin: 0 0; }
.page { width: 1200px; }
`, `<div class="clip"><div class="page"><top-nav></top-nav><hero-banner></hero-banner><start-section></start-section><features-section></features-section><cases-section></cases-section></div></div>`);
</script>
</body>
</html>
